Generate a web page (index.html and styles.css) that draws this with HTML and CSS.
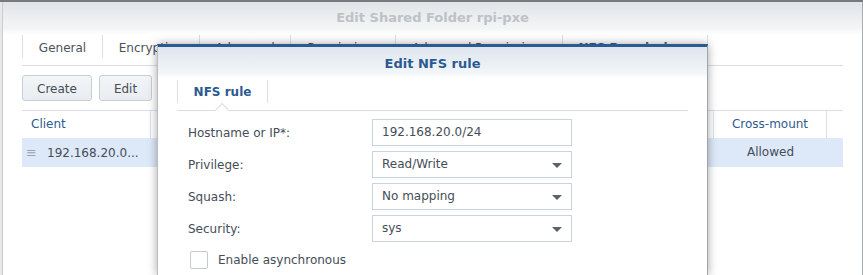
FILE: index.html
```html
<!DOCTYPE html>
<html>
<head>
<meta charset="utf-8">
<link rel="stylesheet" href="styles.css">
</head>
<body>
<div class="topbar"></div>
<div class="window">
  <div class="win-head">Edit Shared Folder rpi-pxe</div>
  <div class="win-body">
    <div class="tabs">
      <div class="tab t1">General</div>
      <div class="tab t2">Encryption</div>
      <div class="tab t3">Advanced</div>
      <div class="tab t4">Permissions</div>
      <div class="tab t5">Advanced Permissions</div>
      <div class="tab t6 active">NFS Permissions</div>
    </div>
    <div class="toolbar">
      <button class="btn b-create">Create</button>
      <button class="btn b-edit">Edit</button>
    </div>
    <div class="grid">
      <div class="gh c-client">Client</div>
      <div class="gh c-mid"></div>
      <div class="gh c-cross">Cross-mount</div>
      <div class="gh c-end"></div>
      <div class="gr c-client"><span class="grip">&#8801;</span>192.168.20.0...</div>
      <div class="gr c-mid"></div>
      <div class="gr c-cross center">Allowed</div>
      <div class="gr c-end"></div>
    </div>
  </div>
</div>

<div class="dialog">
  <div class="dlg-head">Edit NFS rule</div>
  <div class="dlg-body">
    <div class="dtabs">
      <div class="dtab">NFS rule</div>
    </div>
    <div class="form">
      <div class="row">
        <label class="lbl">Hostname or IP*:</label>
        <div class="field">192.168.20.0/24</div>
      </div>
      <div class="row">
        <label class="lbl">Privilege:</label>
        <div class="field select"><span>Read/Write</span><i class="arrow"></i></div>
      </div>
      <div class="row">
        <label class="lbl">Squash:</label>
        <div class="field select"><span>No mapping</span><i class="arrow"></i></div>
      </div>
      <div class="row">
        <label class="lbl">Security:</label>
        <div class="field select"><span>sys</span><i class="arrow"></i></div>
      </div>
      <div class="check-row">
        <span class="checkbox"></span>
        <span class="check-label">Enable asynchronous</span>
      </div>
    </div>
  </div>
</div>
</body>
</html>
```

FILE: styles.css
```css
* { box-sizing: border-box; }
html, body {
  margin: 0;
  padding: 0;
  width: 863px;
  height: 275px;
  overflow: hidden;
  background: #e6e8ea;
  font-family: "DejaVu Sans", Verdana, sans-serif;
  font-size: 12px;
  color: #454d56;
}
.topbar {
  height: 2px;
  background: #76797e;
}
.window {
  margin-left: 2px;
  width: 861px;
  height: 273px;
  background: #fff;
  border-left: 1px solid #c9ccd0;
  border-right: 1px solid #a9adb2;
}
.win-head {
  height: 33px;
  line-height: 31px;
  text-align: center;
  font-weight: bold;
  font-size: 13px;
  color: #bdc2c7;
  background: linear-gradient(#e1e4e7, #f4f5f6 80%, #ffffff);
}
.win-body {
  padding: 0 19px 0 19px;
}
.tabs {
  display: flex;
  height: 31px;
  border-bottom: 1px solid #dcdde0;
}
.tab {
  height: 23px;
  padding-top: 2px;
  line-height: 22px;
  text-align: center;
  border-right: 1px solid #d8e0e9;
  white-space: nowrap;
  overflow: hidden;
  color: #4a525b;
}
.t1 { width: 81px; border-left: 1px solid #d8e0e9; }
.t2 { width: 97px; }
.t3 { width: 91px; }
.t4 { width: 105px; }
.t5 { width: 167px; }
.t6 { width: 145px; }
.tab.active { color: #2b5a91; font-weight: bold; }

.toolbar {
  display: flex;
  gap: 7px;
  margin-top: 9px;
}
.btn {
  height: 26px;
  padding: 1px 0 0 0;
  font-family: inherit;
  font-size: 12px;
  color: #454d56;
  background: linear-gradient(#f3f5f7, #e9edf1);
  border: 1px solid #c6cfd8;
  border-radius: 3px;
}
.b-create { width: 70px; }
.b-edit { width: 53px; }

.grid {
  margin-top: 9px;
  display: grid;
  grid-template-columns: 129px 1fr 113px 16px;
  grid-template-rows: 27px 29px;
  border-top: 1px solid #d7e0ea;
}
.gh {
  line-height: 26px;
  color: #2d5b90;
  border-right: 1px solid #dbe3ec;
  padding-left: 9px;
}
.gh.c-cross { text-align: center; padding-left: 0; }
.gh.c-end { border-right: none; }
.gr {
  background: #dde9f8;
  line-height: 29px;
}
.gr.c-client { padding-left: 4px; white-space: nowrap; }
.grip {
  display: inline-block;
  width: 21px;
  color: #9aa3ad;
  font-size: 13px;
}
.center { text-align: center; }

.dialog {
  position: absolute;
  left: 157px;
  top: 44px;
  width: 551px;
  height: 231px;
  background: #fff;
  border-top: 3px solid #2b5a91;
  border-left: 1px solid #b9bec4;
  border-right: 1px solid #9fa4aa;
  box-shadow: 0 0 9px rgba(0, 0, 0, 0.35);
}
.dlg-head {
  height: 31px;
  line-height: 33px;
  text-align: center;
  font-weight: bold;
  font-size: 13px;
  color: #2b5a91;
  background: linear-gradient(#dde5ee, #f3f6f9 85%, #ffffff);
}
.dlg-body {
  padding: 2px 19px 0 19px;
}
.dtabs {
  position: relative;
  display: flex;
  height: 31px;
  border-bottom: 1px solid #dadcdf;
}
.dtab {
  width: 91px;
  height: 23px;
  line-height: 24px;
  text-align: center;
  font-weight: bold;
  color: #2b5a91;
  border-left: 1px solid #d8e0e9;
  border-right: 1px solid #d8e0e9;
}
.dtabs::after {
  content: "";
  position: absolute;
  left: 40px;
  bottom: -5px;
  width: 9px;
  height: 9px;
  background: #fff;
  border-left: 1px solid #dadcdf;
  border-top: 1px solid #dadcdf;
  transform: rotate(45deg);
}
.form {
  padding: 8px 0 0 11px;
  display: flex;
  flex-direction: column;
  gap: 5px;
}
.row {
  display: grid;
  grid-template-columns: 184px 200px;
  height: 27px;
  align-items: center;
}
.lbl { color: #454d56; }
.field {
  height: 27px;
  border: 1px solid #c9d4df;
  padding: 0 9px;
  line-height: 25px;
  color: #454d56;
  display: flex;
  align-items: center;
  justify-content: space-between;
}
.arrow {
  width: 0;
  height: 0;
  border-left: 5px solid transparent;
  border-right: 5px solid transparent;
  border-top: 5px solid #5b6168;
  margin-top: 1px;
}
.check-row {
  display: flex;
  align-items: center;
  margin-top: 4px;
  padding-left: 2px;
  gap: 10px;
}
.checkbox {
  width: 18px;
  height: 18px;
  border: 1px solid #c2cad3;
  border-radius: 2px;
  background: #fff;
}
.check-label { color: #454d56; }
```
